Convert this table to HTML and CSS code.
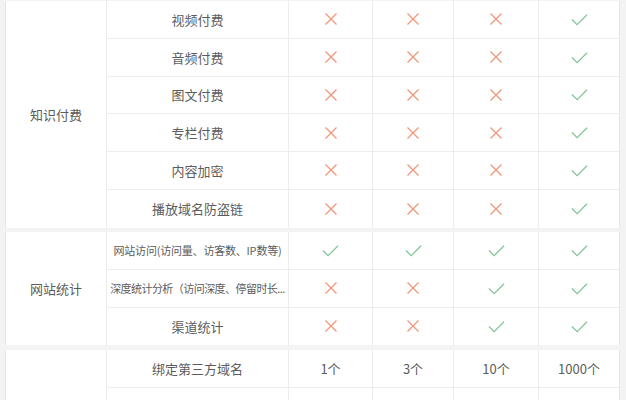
FILE: index.html
```html
<!DOCTYPE html>
<html lang="zh">
<head>
<meta charset="utf-8">
<link rel="stylesheet" href="styles.css">
</head>
<body>
<svg width="0" height="0" class="defs">
  <defs>
    <symbol id="x" viewBox="0 0 14 14"><path d="M1.5 1.5 L12.5 12.5 M12.5 1.5 L1.5 12.5" stroke="#f19478" stroke-width="1.25" fill="none"/></symbol>
    <symbol id="ok" viewBox="0 0 18 13"><path d="M1 6.5 L6.5 12 L17 1.5" stroke="#80c497" stroke-width="1.25" fill="none"/></symbol>
  </defs>
</svg>
<div class="table">
  <div class="group g6">
    <div class="cat">知识付费</div>
    <div class="row"><div class="feat">视频付费</div><div class="c"><svg class="i"><use href="#x"/></svg></div><div class="c"><svg class="i"><use href="#x"/></svg></div><div class="c"><svg class="i"><use href="#x"/></svg></div><div class="c"><svg class="k"><use href="#ok"/></svg></div></div>
    <div class="row"><div class="feat">音频付费</div><div class="c"><svg class="i"><use href="#x"/></svg></div><div class="c"><svg class="i"><use href="#x"/></svg></div><div class="c"><svg class="i"><use href="#x"/></svg></div><div class="c"><svg class="k"><use href="#ok"/></svg></div></div>
    <div class="row"><div class="feat">图文付费</div><div class="c"><svg class="i"><use href="#x"/></svg></div><div class="c"><svg class="i"><use href="#x"/></svg></div><div class="c"><svg class="i"><use href="#x"/></svg></div><div class="c"><svg class="k"><use href="#ok"/></svg></div></div>
    <div class="row"><div class="feat">专栏付费</div><div class="c"><svg class="i"><use href="#x"/></svg></div><div class="c"><svg class="i"><use href="#x"/></svg></div><div class="c"><svg class="i"><use href="#x"/></svg></div><div class="c"><svg class="k"><use href="#ok"/></svg></div></div>
    <div class="row"><div class="feat">内容加密</div><div class="c"><svg class="i"><use href="#x"/></svg></div><div class="c"><svg class="i"><use href="#x"/></svg></div><div class="c"><svg class="i"><use href="#x"/></svg></div><div class="c"><svg class="k"><use href="#ok"/></svg></div></div>
    <div class="row last"><div class="feat">播放域名防盗链</div><div class="c"><svg class="i"><use href="#x"/></svg></div><div class="c"><svg class="i"><use href="#x"/></svg></div><div class="c"><svg class="i"><use href="#x"/></svg></div><div class="c"><svg class="k"><use href="#ok"/></svg></div></div>
  </div>
  <div class="group g3">
    <div class="cat">网站统计</div>
    <div class="row"><div class="feat small">网站访问(访问量、访客数、IP数等)</div><div class="c"><svg class="k"><use href="#ok"/></svg></div><div class="c"><svg class="k"><use href="#ok"/></svg></div><div class="c"><svg class="k"><use href="#ok"/></svg></div><div class="c"><svg class="k"><use href="#ok"/></svg></div></div>
    <div class="row"><div class="feat small tight">深度统计分析（访问深度、停留时长...</div><div class="c"><svg class="i"><use href="#x"/></svg></div><div class="c"><svg class="i"><use href="#x"/></svg></div><div class="c"><svg class="k"><use href="#ok"/></svg></div><div class="c"><svg class="k"><use href="#ok"/></svg></div></div>
    <div class="row last"><div class="feat">渠道统计</div><div class="c"><svg class="i"><use href="#x"/></svg></div><div class="c"><svg class="i"><use href="#x"/></svg></div><div class="c"><svg class="k"><use href="#ok"/></svg></div><div class="c"><svg class="k"><use href="#ok"/></svg></div></div>
  </div>
  <div class="group g3">
    <div class="cat">网站设置</div>
    <div class="row"><div class="feat">绑定第三方域名</div><div class="c">1个</div><div class="c">3个</div><div class="c">10个</div><div class="c">1000个</div></div>
    <div class="row"><div class="feat">去除底部版权信息</div><div class="c"><svg class="i"><use href="#x"/></svg></div><div class="c"><svg class="k"><use href="#ok"/></svg></div><div class="c"><svg class="k"><use href="#ok"/></svg></div><div class="c"><svg class="k"><use href="#ok"/></svg></div></div>
    <div class="row last"><div class="feat">自定义页面</div><div class="c"><svg class="i"><use href="#x"/></svg></div><div class="c"><svg class="k"><use href="#ok"/></svg></div><div class="c"><svg class="k"><use href="#ok"/></svg></div><div class="c"><svg class="k"><use href="#ok"/></svg></div></div>
  </div>
</div>
</body>
</html>
```
FILE: styles.css
```css
html, body {
  margin: 0;
  padding: 0;
  background: #f3f3f3;
  overflow: hidden;
}
.defs { position: absolute; }
body {
  font-family: "Noto Sans CJK SC", "Noto Sans", sans-serif;
  color: #5c5c5c;
  font-size: 13px;
}
.table {
  padding: 1px 0 0 5px;
  width: 615px;
  display: flex;
  flex-direction: column;
  gap: 4.5px;
}
.group {
  display: grid;
  grid-template-columns: 101px 1fr;
  background: #fff;
  border-left: 1px solid #e6e6e6;
  border-right: 1px solid #e6e6e6;
}
.cat {
  grid-row: 1 / span 6;
  display: flex;
  align-items: center;
  justify-content: center;
  border-right: 1px solid #ebebeb;
}
.g3 .cat { grid-row: 1 / span 3; }
.row {
  grid-column: 2;
  display: grid;
  grid-template-columns: 182px 84px 81px 85px 1fr;
  height: 37.75px;
  box-sizing: border-box;
  border-bottom: 1px solid #ededed;
}
.row.last { border-bottom: none; }
.row > div {
  display: flex;
  align-items: center;
  justify-content: center;
  border-right: 1px solid #ededed;
  min-width: 0;
}
.row > div:last-child { border-right: none; }
.feat.small {
  font-size: 11px;
  letter-spacing: -0.2px;
  white-space: nowrap;
}
.feat.small.tight {
  letter-spacing: -0.55px;
}
.i { width: 14px; height: 14px; }
.k { width: 17px; height: 13px; }
```
